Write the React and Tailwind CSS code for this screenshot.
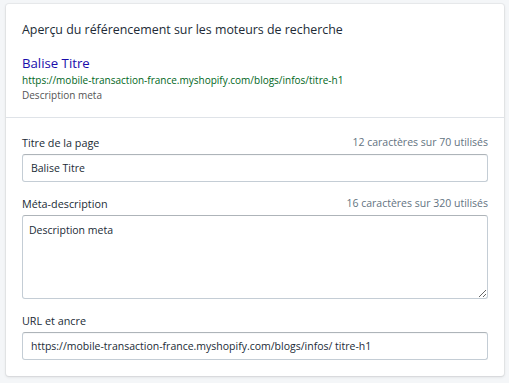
import React from "react";

const Field = ({ label, counter, children }) => (
  <div>
    <div className="flex items-center justify-between h-[20px] mb-[1px]">
      <span className="text-[10.8px] text-[#212b36]">{label}</span>
      {counter && <span className="text-[10.5px] text-[#637381]">{counter}</span>}
    </div>
    {children}
  </div>
);

const inputCls =
  "w-full h-[28px] px-2 rounded-[3px] border border-[#c4cdd5] border-t-[#aeb4b9] bg-white text-[10.5px] text-[#212b36] outline-none shadow-[inset_0_1px_0_0_rgba(99,115,129,0.05)]";

export default function App() {
  return (
    <div
      className="min-h-screen bg-[#f4f6f8] pl-[6px] pr-[5px] pt-[4px] pb-2"
      style={{ fontFamily: '"Open Sans", "Noto Sans", sans-serif' }}
    >
      <div className="bg-white rounded-[3px] shadow-[0_0_0_1px_rgba(63,63,68,0.05),0_1px_3px_0_rgba(63,63,68,0.15)]">
        {/* aperçu google */}
        <div className="px-4 pt-4 pb-[14px] border-b border-[#dfe3e8]">
          <h2 className="text-[12.4px] leading-[20px] text-[#212b36]">
            Aperçu du référencement sur les moteurs de recherche
          </h2>
          <div className="mt-[14px] text-[13.2px] leading-[18px] text-[#1a0dab]">Balise Titre</div>
          <div className="text-[10px] leading-[16px] text-[#006621]">
            https://mobile-transaction-france.myshopify.com/blogs/infos/titre-h1
          </div>
          <div className="text-[10px] leading-[15px] text-[#545454]">Description meta</div>
        </div>

        {/* champs */}
        <div className="px-4 pt-[15px] pb-4 flex flex-col gap-3">
          <Field label="Titre de la page" counter="12 caractères sur 70 utilisés">
            <input className={inputCls} defaultValue="Balise Titre" />
          </Field>
          <Field label="Méta-description" counter="16 caractères sur 320 utilisés">
            <textarea
              className="block w-full h-[84px] px-[6px] pt-1 rounded-[3px] border border-[#c4cdd5] border-t-[#aeb4b9] bg-white text-[10.5px] leading-[20px] text-[#212b36] outline-none"
              defaultValue="Description meta"
            />
          </Field>
          <Field label="URL et ancre">
            <input
              className={inputCls}
              defaultValue="https://mobile-transaction-france.myshopify.com/blogs/infos/ titre-h1"
            />
          </Field>
        </div>
      </div>
    </div>
  );
}
